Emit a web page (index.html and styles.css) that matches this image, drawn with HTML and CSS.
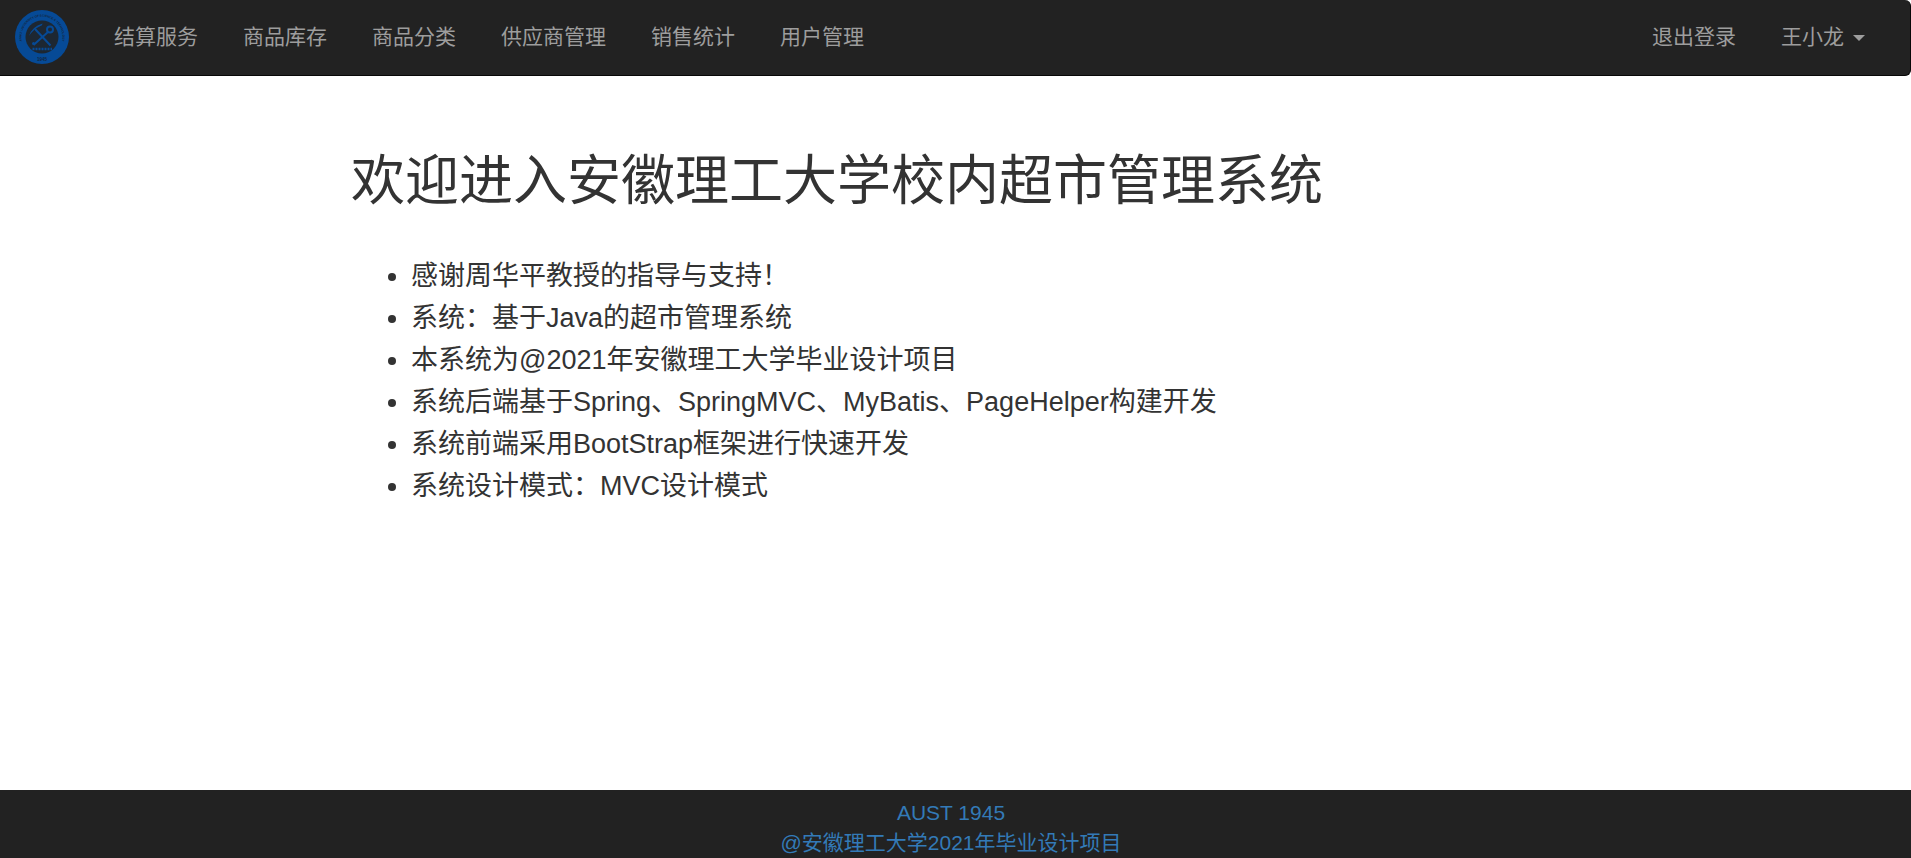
FILE: index.html
```
<!DOCTYPE html>
<html lang="zh-CN">
	<head>
		<meta charset="utf-8">
		<title>超市管理系统</title>
		<link rel="stylesheet" href="styles.css">
	</head>
	<body>
	<nav class="navbar">
		<a class="navbar-brand" href="#" aria-label="首页">
			<svg class="logo" viewBox="0 0 108 108">
				<defs>
					<path id="ring-top" d="M 23 81 A 41 41 0 1 1 85 81"/>
				</defs>
				<circle class="logo-disc" cx="54" cy="54" r="54"/>
				<circle class="logo-center" cx="54" cy="54" r="33"/>
				<text class="logo-text"><textPath href="#ring-top" startOffset="50%">ANHUI UNIVERSITY OF SCIENCE &amp; TECHNOLOGY</textPath></text>
				<text class="logo-year" x="54" y="101">1945</text>
				<!-- pickaxe and wrench -->
				<path class="logo-line" d="M40 38 L71 71 M66 44 L37 70"/>
				<path class="logo-dot" d="M28 52 Q34 33 55 27 Q55 31 51 32 Q37 38 28 52 Z"/>
				<circle class="logo-line" cx="70" cy="39" r="6"/>
				<circle class="logo-dot" cx="37" cy="67" r="3"/>
				<path class="logo-motto" d="M35 78 H74"/>
			</svg>
		</a>
		<ul class="nav">
			<li><a href="#">结算服务</a></li>
			<li><a href="#">商品库存</a></li>
			<li><a href="#">商品分类</a></li>
			<li><a href="#">供应商管理</a></li>
			<li><a href="#">销售统计</a></li>
			<li><a href="#">用户管理</a></li>
		</ul>
		<ul class="nav navbar-right">
			<li><a href="#">退出登录</a></li>
			<li><a href="#">王小龙<span class="caret"></span></a></li>
		</ul>
	</nav>

	<main class="container">
		<h1>欢迎进入安徽理工大学校内超市管理系统</h1>
		<ul class="intro">
			<li>感谢周华平教授的指导与支持！</li>
			<li>系统：基于Java的超市管理系统</li>
			<li>本系统为@2021年安徽理工大学毕业设计项目</li>
			<li>系统后端基于Spring、SpringMVC、MyBatis、PageHelper构建开发</li>
			<li>系统前端采用BootStrap框架进行快速开发</li>
			<li>系统设计模式：MVC设计模式</li>
		</ul>
	</main>

	<footer class="footer">
		<a href="#">AUST 1945</a>
		<a href="#">@安徽理工大学2021年毕业设计项目</a>
	</footer>
	</body>
</html>
```
FILE: styles.css
```
* {
  box-sizing: border-box;
}
body {
  display: flex;
  flex-direction: column;
  min-height: 100vh;
  margin: 0;
  background: #fff;
  color: #333;
  font-family: "Liberation Sans", "Noto Sans CJK SC", sans-serif;
  font-size: 21px;
  line-height: 30px;
}
a {
  color: #337ab7;
  text-decoration: none;
}
.navbar {
  display: flex;
  align-items: center;
  padding: 0 22px 1px 15px;
  background: #222;
  border: 1px solid #080808;
  border-width: 0 1px 1px 0;
  border-radius: 0 6px 6px 0;
}
.navbar-brand {
  display: flex;
  margin-right: 23px;
}
.logo {
  width: 54px;
  height: 54px;
}
.nav {
  display: flex;
  margin: 0;
  padding: 0;
  list-style: none;
}
.nav a {
  display: block;
  padding: 22px 23px 22px 22px;
  color: #9d9d9d;
}
.nav a:hover {
  color: #fff;
}
.navbar-right {
  margin-left: auto;
}
.caret {
  display: inline-block;
  margin-left: 9px;
  vertical-align: middle;
  border-top: 6px solid;
  border-right: 6px solid transparent;
  border-left: 6px solid transparent;
}

/* school badge */
.logo-disc {
  fill: #064a96;
}
.logo-center {
  fill: #1d2732;
}
.logo-text,
.logo-year {
  fill: #14263c;
  font-size: 6px;
  font-weight: bold;
  text-anchor: middle;
}
.logo-year {
  font-size: 9px;
}
.logo-line {
  fill: none;
  stroke: #064a96;
  stroke-width: 4;
}
.logo-dot {
  fill: #064a96;
}
.logo-motto {
  stroke: #064a96;
  stroke-width: 5;
  stroke-dasharray: 4 2;
}

.container {
  flex: 1;
  width: 64%;
  margin: 0 auto;
  padding: 75px 7px 0;
}
h1 {
  margin: 0;
  font-size: 54px;
  font-weight: 400;
  line-height: 60px;
}
.intro {
  margin: 44px 0;
  padding-left: 60px;
  font-size: 27px;
  line-height: 42px;
}
.footer {
  display: flex;
  flex-direction: column;
  align-items: center;
  padding: 8px 9px 0 0;
  background: #222;
}
```
